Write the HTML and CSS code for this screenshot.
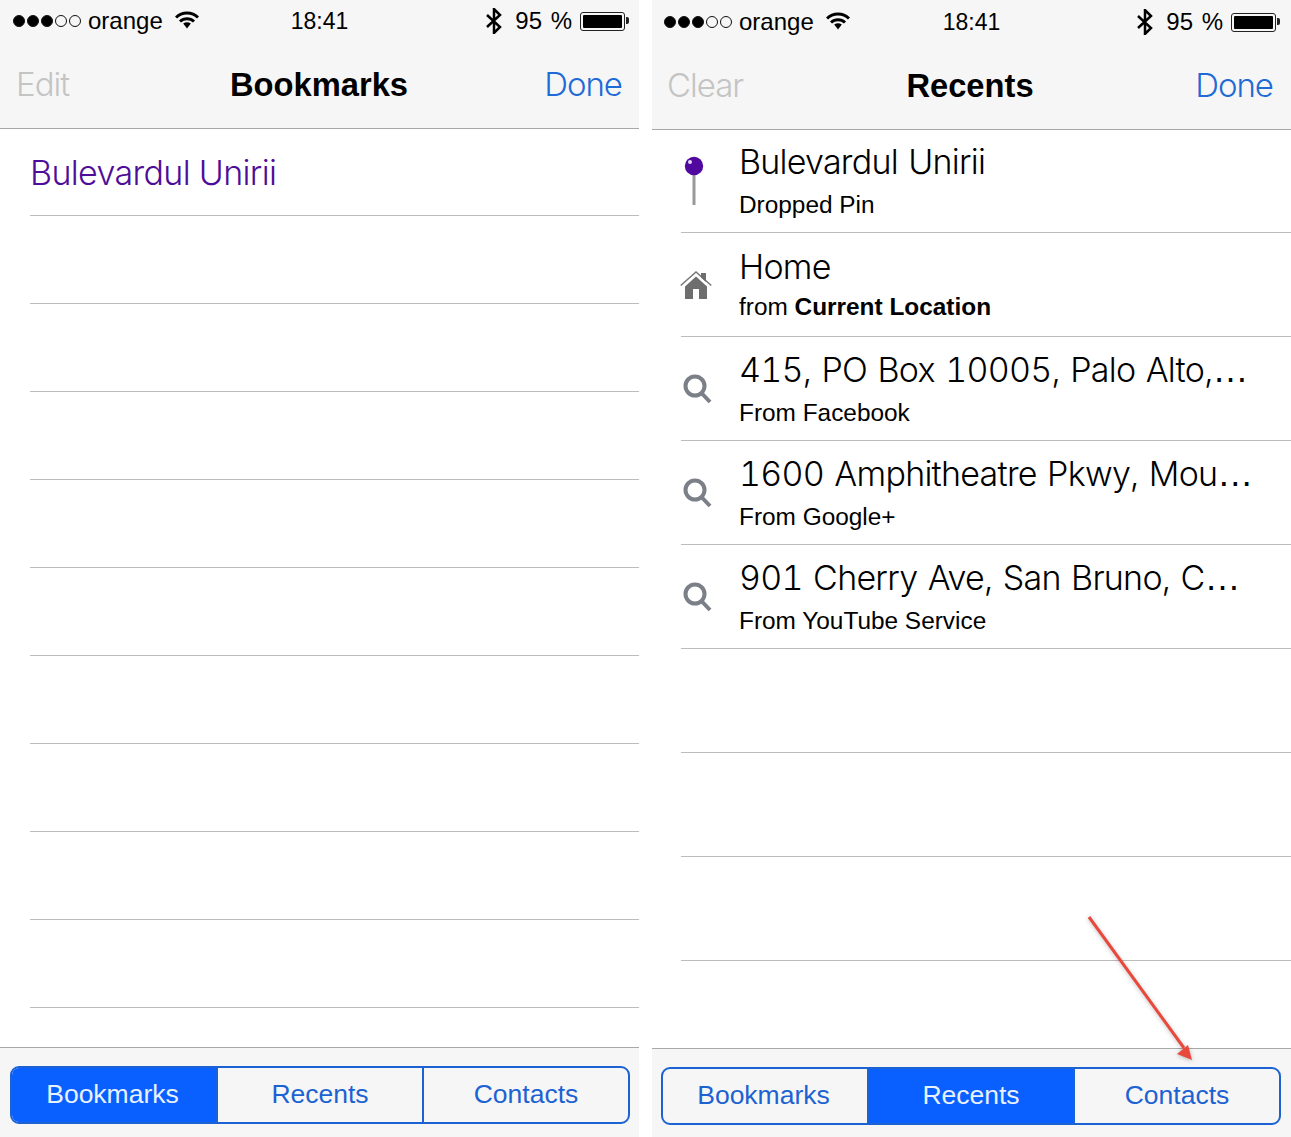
FILE: index.html
```html
<!DOCTYPE html>
<html lang="en">
<head>
    <meta charset="UTF-8">
    <title>Bookmarks and Recents</title>
    <link rel="stylesheet" href="styles.css">
</head>
<body>
    <div class="phone phone-bookmarks">
        <div class="top-bar">
            <div class="status">
                <div class="status-left">
                    <div class="signal"><i class="on"></i><i class="on"></i><i class="on"></i><i></i><i></i></div>
                    <span class="carrier">orange</span>
                    <svg class="wifi" viewBox="0 0 24 18"><path d="M1 6.5C7 .6 17 .6 23 6.5" /><path d="M5 10.5c4-3.8 10-3.8 14 0" /><path class="wifi-tip" d="M8.2 12.6c2.300-1.700 5.300-1.700 7.600 0L12 17.500z" /></svg>
                </div>
                <div class="time">18:41</div>
                <div class="status-right">
                    <svg class="bt" viewBox="0 0 18 26"><path d="M2 7l13 12-6 6V1l6 6L2 19" /></svg>
                    <span class="percent">95 %</span>
                    <div class="battery"><div class="battery-fill"></div></div>
                </div>
            </div>
            <div class="nav">
                <span class="nav-left">Edit</span>
                <span class="nav-title">Bookmarks</span>
                <span class="nav-right">Done</span>
            </div>
        </div>
        <div class="list">
            <div class="row"><span class="bookmark-name">Bulevardul Unirii</span></div>
            <div class="row"></div>
            <div class="row"></div>
            <div class="row"></div>
            <div class="row"></div>
            <div class="row"></div>
            <div class="row"></div>
            <div class="row"></div>
            <div class="row"></div>
            <div class="row"></div>
        </div>
        <div class="tab-bar">
            <div class="segments">
                <div class="segment active">Bookmarks</div>
                <div class="segment">Recents</div>
                <div class="segment">Contacts</div>
            </div>
        </div>
    </div>

    <div class="phone phone-recents">
        <div class="top-bar">
            <div class="status">
                <div class="status-left">
                    <div class="signal"><i class="on"></i><i class="on"></i><i class="on"></i><i></i><i></i></div>
                    <span class="carrier">orange</span>
                    <svg class="wifi" viewBox="0 0 24 18"><path d="M1 6.5C7 .6 17 .6 23 6.5" /><path d="M5 10.5c4-3.8 10-3.8 14 0" /><path class="wifi-tip" d="M8.2 12.6c2.300-1.700 5.300-1.700 7.600 0L12 17.500z" /></svg>
                </div>
                <div class="time">18:41</div>
                <div class="status-right">
                    <svg class="bt" viewBox="0 0 18 26"><path d="M2 7l13 12-6 6V1l6 6L2 19" /></svg>
                    <span class="percent">95 %</span>
                    <div class="battery"><div class="battery-fill"></div></div>
                </div>
            </div>
            <div class="nav">
                <span class="nav-left">Clear</span>
                <span class="nav-title">Recents</span>
                <span class="nav-right">Done</span>
            </div>
        </div>
        <div class="list">
            <div class="row">
                <svg class="row-icon" viewBox="0 0 32 50"><rect class="pin-stem" x="12.500" y="14" width="3" height="35" /><circle class="pin-head" cx="14" cy="10" r="9.200" /><circle class="pin-shine" cx="10" cy="6" r="2" /></svg>
                <div class="row-text">
                    <div class="title">Bulevardul Unirii</div>
                    <div class="sub">Dropped Pin</div>
                </div>
            </div>
            <div class="row row-home">
                <svg class="row-icon" viewBox="0 0 32 30"><path class="house-roof" d="M.7 15.500L16 2l15.300 13.500" /><path class="house-body" d="M5 16.500L16 6.500l11 10V29h-8v-10h-6v10H5zM21 3h5v9l-5-4.500z" /></svg>
                <div class="row-text">
                    <div class="title">Home</div>
                    <div class="sub">from <b>Current Location</b></div>
                </div>
            </div>
            <div class="row">
                <svg class="row-icon" viewBox="0 0 32 30"><circle class="search" cx="15" cy="12" r="9.500" /><path class="search" d="M21.500 19l8.500 9" /></svg>
                <div class="row-text">
                    <div class="title">415, PO Box 10005, Palo Alto,<span class="ell">…</span></div>
                    <div class="sub">From Facebook</div>
                </div>
            </div>
            <div class="row">
                <svg class="row-icon" viewBox="0 0 32 30"><circle class="search" cx="15" cy="12" r="9.500" /><path class="search" d="M21.500 19l8.500 9" /></svg>
                <div class="row-text">
                    <div class="title">1600 Amphitheatre Pkwy, Mou<span class="ell">…</span></div>
                    <div class="sub">From Google+</div>
                </div>
            </div>
            <div class="row">
                <svg class="row-icon" viewBox="0 0 32 30"><circle class="search" cx="15" cy="12" r="9.500" /><path class="search" d="M21.500 19l8.500 9" /></svg>
                <div class="row-text">
                    <div class="title">901 Cherry Ave, San Bruno, C<span class="ell">…</span></div>
                    <div class="sub">From YouTube Service</div>
                </div>
            </div>
            <div class="row"></div>
            <div class="row"></div>
            <div class="row"></div>
        </div>
        <div class="tab-bar">
            <div class="segments">
                <div class="segment">Bookmarks</div>
                <div class="segment active">Recents</div>
                <div class="segment">Contacts</div>
            </div>
        </div>
        <svg class="arrow" viewBox="0 0 120 160"><path class="arrow-line" d="M2 1l95 131" /><path class="arrow-head" d="M105 144L90 138l11-9z" /></svg>
    </div>
</body>
</html>
```

FILE: styles.css
```css
body {
    font-family: "Liberation Sans", Arial, sans-serif;
    background-color: #fff;
    margin: 0;
    display: flex;
    gap: 13px;
    height: 1137px;
    overflow: hidden;
    color: #000;
}
.phone {
    position: relative;
    width: 639px;
    height: 1137px;
    display: flex;
    flex-direction: column;
}
.top-bar {
    height: 128px;
    flex: none;
    background-color: #f6f6f6;
    border-bottom: 1px solid #a8a8a8;
}
.phone-recents .top-bar {
    height: 129px;
}
.phone-recents .status {
    padding-top: 1px;
}
.status {
    height: 42px;
    display: grid;
    grid-template-columns: 1fr auto 1fr;
    align-items: center;
    font-size: 24px;
}
.status-left, .status-right {
    display: flex;
    align-items: center;
}
.status-left {
    padding-left: 13px;
}
.phone-recents .status-left {
    padding-left: 12px;
}
.status-right {
    justify-content: flex-end;
    padding-right: 14px;
}
.phone-recents .status-right {
    padding-right: 15px;
}
.signal {
    display: flex;
    gap: 2px;
}
.signal i {
    width: 10px;
    height: 10px;
    border: 1px solid #111;
    border-radius: 50%;
}
.signal i.on {
    background-color: #000;
}
.carrier {
    margin-left: 7px;
}
.wifi {
    width: 24px;
    height: 18px;
    margin-left: 12px;
    margin-top: -3px;
}
.wifi path {
    fill: none;
    stroke: #000;
    stroke-width: 3;
}
.wifi .wifi-tip {
    fill: #000;
    stroke: none;
}
.time {
    font-size: 23px;
}
.bt {
    width: 18px;
    height: 26px;
    margin-right: 12px;
}
.bt path {
    fill: none;
    stroke: #000;
    stroke-width: 2.500;
}
.percent {
    word-spacing: 2px;
}
.battery {
    position: relative;
    box-sizing: border-box;
    width: 45px;
    height: 19px;
    margin-left: 8px;
    padding: 2px;
    border: 1px solid #222;
    border-radius: 3px;
}
.battery:after {
    content: "";
    position: absolute;
    right: -5px;
    top: 4px;
    width: 3px;
    height: 7px;
    background-color: #222;
    border-radius: 0 2px 2px 0;
}
.battery-fill {
    height: 100%;
    background-color: #000;
    border-radius: 1px;
}
.nav {
    height: 86px;
    display: grid;
    grid-template-columns: 1fr auto 1fr;
    align-items: center;
    padding: 0 17px 0 16px;
}
.phone-recents .nav {
    padding: 0 18px 0 15px;
}
.nav-left, .nav-right {
    font-family: Inter, sans-serif;
    font-weight: 300;
    font-size: 33px;
    letter-spacing: -1px;
    margin-bottom: 2px;
}
.nav-left {
    color: #c4c4c4;
}
.nav-right {
    color: #1f6ad6;
    text-align: right;
}
.nav-title {
    font-size: 32.700px;
    font-weight: bold;
}
.list {
    flex: 1;
    overflow: hidden;
}
.row {
    box-sizing: border-box;
    height: 88px;
    margin-left: 30px;
    border-bottom: 1px solid #bcbcbc;
}
.row:first-child {
    height: 87px;
}
.bookmark-name {
    display: block;
    padding-top: 23px;
    font-family: Inter, sans-serif;
    font-weight: 300;
    font-size: 34px;
    letter-spacing: -0.650px;
    color: #4e0d99;
}
.phone-recents .row {
    height: 104px;
    margin-left: 29px;
    display: flex;
    align-items: center;
}
.phone-recents .row:first-child {
    height: 103px;
}
.row-icon {
    width: 32px;
    flex: none;
    margin-left: -1px;
}
.row-text {
    margin-left: 27px;
    align-self: flex-end;
    padding-bottom: 13px;
    white-space: nowrap;
}
.title {
    font-family: Inter, sans-serif;
    font-weight: 300;
    font-size: 34px;
    font-variant-numeric: tabular-nums;
    letter-spacing: -0.750px;
    word-spacing: 2px;
    line-height: 44px;
}
.ell {
    font-family: "Liberation Sans", Arial, sans-serif;
    font-size: 36px;
    line-height: 0;
    letter-spacing: 0;
}
.sub {
    font-size: 24.400px;
    line-height: 28px;
    margin-top: 7px;
}
.row-home .sub {
    margin-top: 4px;
    margin-bottom: 2px;
}
.pin-stem {
    fill: #999;
}
.pin-head {
    fill: #50089e;
}
.pin-shine {
    fill: #e6d8f5;
}
.house-roof {
    fill: none;
    stroke: #777;
    stroke-width: 1.500;
}
.house-body {
    fill: #6e6e6e;
}
.search {
    fill: none;
    stroke: #7b7f87;
    stroke-width: 4;
}
.tab-bar {
    box-sizing: border-box;
    height: 90px;
    flex: none;
    padding: 18px 9px 0 10px;
    background-color: #f6f6f6;
    border-top: 1px solid #a8a8a8;
}
.phone-recents .tab-bar {
    height: 89px;
    padding: 18px 10px 0 9px;
}
.segments {
    box-sizing: border-box;
    height: 58px;
    display: flex;
    border: 2px solid #1c62d2;
    border-radius: 9px;
    overflow: hidden;
}
.segment {
    flex: 1;
    display: flex;
    align-items: center;
    justify-content: center;
    padding-bottom: 2px;
    font-size: 26.500px;
    color: #1c62d2;
    border-left: 2px solid #1c62d2;
}
.segment:first-child {
    border-left: none;
    text-indent: -3px;
}
.segment.active {
    background-color: #0a60ff;
    color: #e8f1ff;
}
.arrow {
    position: absolute;
    left: 435px;
    top: 916px;
    width: 120px;
    height: 160px;
    filter: drop-shadow(0 1px 2px rgba(0, 0, 0, 0.25));
}
.arrow-line {
    fill: none;
    stroke: #e8493c;
    stroke-width: 3;
}
.arrow-head {
    fill: #e8493c;
}
```
